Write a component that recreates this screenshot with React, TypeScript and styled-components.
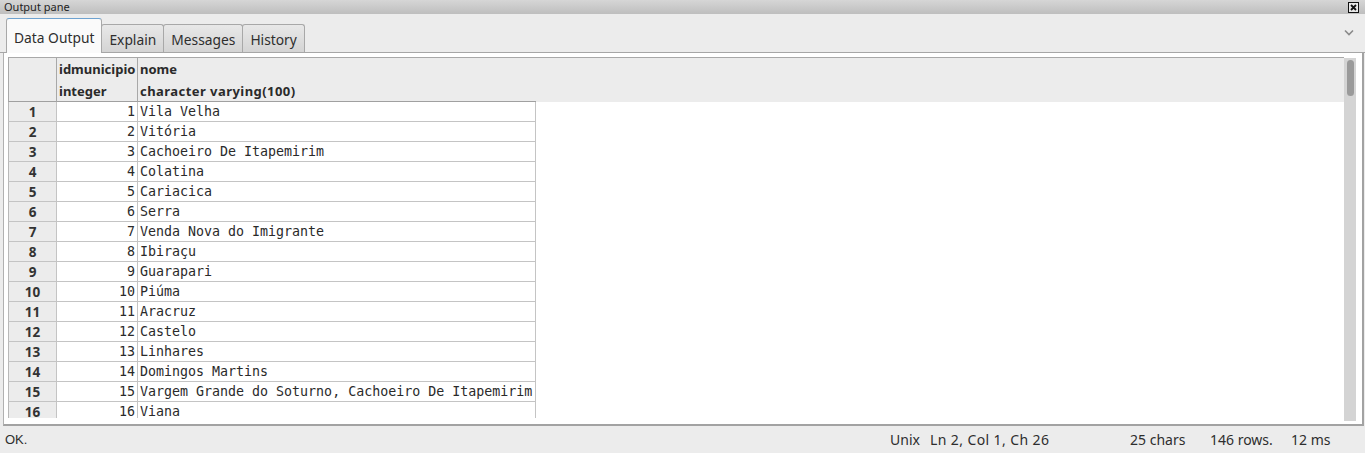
import React from "react";
import styled, { createGlobalStyle } from "styled-components";

const Global = createGlobalStyle`
  html, body { margin: 0; padding: 0; background: #ececec; }
  body { font-family: "Noto Sans", "DejaVu Sans", sans-serif; }
`;

const rows: [number, string][] = [
  [1, "Vila Velha"],
  [2, "Vitória"],
  [3, "Cachoeiro De Itapemirim"],
  [4, "Colatina"],
  [5, "Cariacica"],
  [6, "Serra"],
  [7, "Venda Nova do Imigrante"],
  [8, "Ibiraçu"],
  [9, "Guarapari"],
  [10, "Piúma"],
  [11, "Aracruz"],
  [12, "Castelo"],
  [13, "Linhares"],
  [14, "Domingos Martins"],
  [15, "Vargem Grande do Soturno, Cachoeiro De Itapemirim"],
  [16, "Viana"],
];

const Window = styled.div`
  width: 1365px;
  height: 453px;
  display: flex;
  flex-direction: column;
  background: #ececec;
  overflow: hidden;
`;

const TitleBar = styled.div`
  height: 14px;
  flex: none;
  display: flex;
  align-items: center;
  justify-content: space-between;
  padding: 0 6px 0 4px;
  background: linear-gradient(#d6d6d6, #bebebe);
  font-size: 11px;
  color: #222;
  line-height: 14px;
`;

const CloseBox = styled.svg`
  width: 11px;
  height: 11px;
  display: block;
`;

const TabBar = styled.div`
  height: 39px;
  flex: none;
  display: flex;
  align-items: flex-end;
  padding: 0 0 0 6px;
  position: relative;
  border-bottom: 1px solid #a6a6a6;
  box-sizing: border-box;
`;

const Tab = styled.div<{ $active?: boolean }>`
  box-sizing: border-box;
  height: ${(p) => (p.$active ? "35px" : "28px")};
  padding: 2px 7px 0;
  display: flex;
  align-items: center;
  font-size: 13.8px;
  color: #2e2e2e;
  border: 1px solid #a8a8a8;
  border-bottom: none;
  border-radius: 3px 3px 0 0;
  margin-bottom: ${(p) => (p.$active ? "-1px" : "0")};
  background: ${(p) =>
    p.$active ? "#fafafa" : "linear-gradient(#e8e8e8, #d4d4d4)"};
  border-top-color: ${(p) => (p.$active ? "#6ea2d0" : "#a8a8a8")};
  margin-left: ${(p) => (p.$active ? "0" : "-1px")};
  z-index: ${(p) => (p.$active ? 1 : 0)};
`;

const Chevron = styled.svg`
  position: absolute;
  right: 11px;
  top: 15px;
  width: 10px;
  height: 7px;
`;

const Panel = styled.div`
  flex: 1;
  min-height: 0;
  display: flex;
  background: #fff;
  margin: 0 1px 0 3px;
  border-left: 1px solid #b0b0b0;
  border-right: 2px solid #a2a2a2;
  border-bottom: 2px solid #a2a2a2;
  padding: 4px 6px 0 4px;
  box-sizing: border-box;
`;

const GridViewport = styled.div`
  flex: 1;
  height: 360px;
  overflow: hidden;
  display: flex;
  flex-direction: column;
  border-top: 1px solid #a8a8a8;
`;

const HeaderRow = styled.div`
  display: flex;
  height: 44px;
  flex: none;
  background: #ececec;
`;

const HeadCell = styled.div<{ $w: number }>`
  width: ${(p) => p.$w}px;
  flex: none;
  box-sizing: border-box;
  border-left: 1px solid #a8a8a8;
  border-bottom: 1px solid #a0a0a0;
  padding: 0 0 0 2px;
  font-size: 13px;
  font-weight: 700;
  color: #2a2a2a;
  line-height: 22px;
  white-space: nowrap;
  &:last-of-type {
    border-right: 1px solid #a0a0a0;
  }
`;

const WideText = styled.span`
  letter-spacing: 0.45px;
`;

const HeadFill = styled.div`
  flex: 1;
`;

const DataRow = styled.div`
  display: flex;
  height: 20px;
  flex: none;
`;

const RowHead = styled.div`
  width: 48px;
  flex: none;
  box-sizing: border-box;
  background: #ececec;
  border-left: 1px solid #b8b8b8;
  border-bottom: 1px solid #c4c4c4;
  text-align: center;
  font-size: 13.5px;
  font-weight: 700;
  color: #333;
  line-height: 20px;
`;

const Cell = styled.div<{ $w: number; $num?: boolean }>`
  width: ${(p) => p.$w}px;
  flex: none;
  box-sizing: border-box;
  border-left: 1px solid #c4c4c4;
  border-bottom: 1px solid #c4c4c4;
  font-family: "DejaVu Sans Mono", monospace;
  font-size: 13.3px;
  color: #2a2a2a;
  line-height: 20px;
  white-space: nowrap;
  overflow: hidden;
  text-align: ${(p) => (p.$num ? "right" : "left")};
  padding: ${(p) => (p.$num ? "0 2px 0 0" : "0 0 0 2px")};
  &:last-child {
    border-right: 1px solid #c4c4c4;
  }
`;

const Scrollbar = styled.div`
  width: 12px;
  height: 363px;
  flex: none;
  background: #d4d4d4;
  margin-top: 1px;
  padding: 2px 2px 0 3px;
  box-sizing: border-box;
`;

const Thumb = styled.div`
  width: 7px;
  height: 36px;
  border-radius: 4px;
  background: #9a9a9a;
`;

const StatusBar = styled.div`
  height: 27px;
  flex: none;
  display: flex;
  align-items: center;
  font-size: 14px;
  color: #2e2e2e;
`;

const StatusMain = styled.div`
  flex: 1;
  padding-left: 5px;
  font-size: 13px;
  font-family: "Liberation Sans", Arial, sans-serif;
`;

const StatusField = styled.div<{ $w: number; $spread?: boolean }>`
  width: ${(p) => p.$w}px;
  flex: none;
  white-space: nowrap;
  letter-spacing: ${(p) => (p.$spread ? "0.4px" : "0")};
`;

export default function App() {
  return (
    <Window>
      <Global />
      <TitleBar>
        <span>Output pane</span>
        <CloseBox viewBox="0 0 11 11">
          <rect x="0.5" y="0.5" width="10" height="10" fill="#e8e8e8" stroke="#111" />
          <path d="M3 3 L8 8 M8 3 L3 8" stroke="#111" strokeWidth="1.8" />
        </CloseBox>
      </TitleBar>
      <TabBar>
        <Tab $active>Data Output</Tab>
        <Tab>Explain</Tab>
        <Tab>Messages</Tab>
        <Tab>History</Tab>
        <Chevron viewBox="0 0 10 7">
          <path d="M1 1.5 L5 5.5 L9 1.5" fill="none" stroke="#8a8a8a" strokeWidth="1.6" />
        </Chevron>
      </TabBar>
      <Panel>
        <GridViewport>
          <HeaderRow>
            <HeadCell $w={48} />
            <HeadCell $w={81}>
              idmunicipio
              <br />
              integer
            </HeadCell>
            <HeadCell $w={399}>
              nome
              <br />
              <WideText>character varying(100)</WideText>
            </HeadCell>
            <HeadFill />
          </HeaderRow>
          {rows.map(([id, name]) => (
            <DataRow key={id}>
              <RowHead>{id}</RowHead>
              <Cell $w={81} $num>
                {id}
              </Cell>
              <Cell $w={399}>{name}</Cell>
            </DataRow>
          ))}
        </GridViewport>
        <Scrollbar>
          <Thumb />
        </Scrollbar>
      </Panel>
      <StatusBar>
        <StatusMain>OK.</StatusMain>
        <StatusField $w={40}>Unix</StatusField>
        <StatusField $w={200} $spread>Ln 2, Col 1, Ch 26</StatusField>
        <StatusField $w={80}>25 chars</StatusField>
        <StatusField $w={81}>146 rows.</StatusField>
        <StatusField $w={74}>12 ms</StatusField>
      </StatusBar>
    </Window>
  );
}
